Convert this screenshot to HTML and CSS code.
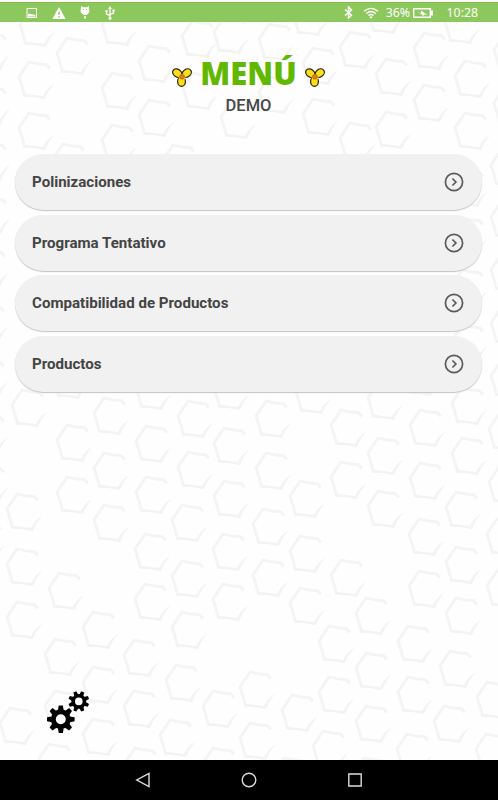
FILE: index.html
```
<!DOCTYPE html>
<html lang="es">
<head>
  <meta charset="UTF-8">
  <title>Menú</title>
  <link rel="stylesheet" href="styles.css">
</head>
<body>

<div class="status-bar">
  <div class="notifications">
    <svg width="12" height="12" viewBox="0 0 12 12"><path d="M1 1.500h9.500v9H1z" fill="none" stroke="#fff"/><path d="M2 9.500V7l1.500-.5L5 7.500l1.500-.5 1 1 1-.5 1 1v1z" fill="#fff"/></svg>
    <svg width="14" height="12" viewBox="0 0 14 12"><path d="M7 0l6.700 12H.3z" fill="#fff"/><path d="M7 4.500v3.500M7 9v1.500" stroke="#8dc85c" stroke-width="1.300"/></svg>
    <svg width="10" height="13" viewBox="0 0 10 13"><path d="M1 0l2 1.200h4L9 0v3l.6 1.500L8.800 7 6.500 9h-3L1.200 7 .4 4.500 1 3z" fill="#fff"/><path d="M5 10v2.700" stroke="#fff" stroke-width="1.500"/><path d="M3 3.500h.8M6.200 3.500H7" stroke="#8dc85c"/></svg>
    <svg width="10" height="14" viewBox="0 0 10 14"><path d="M5 2v10M5 9.500L1.500 8V5.500M5 8.500l3.500-1.500V4.500" fill="none" stroke="#fff" stroke-width="1.300"/><path d="M5 0l2 3H3zM7.300 3.500h2.400v2.200H7.300z" fill="#fff"/><circle cx="1.600" cy="5.300" r="1.300" fill="#fff"/><circle cx="5" cy="12.300" r="1.500" fill="#fff"/></svg>
  </div>
  <div class="system">
    <svg class="bluetooth" width="9" height="13" viewBox="0 0 9 13"><path d="M1 3.500l6.500 5.500-3 3V1l3 3L1 9.500" fill="none" stroke="#fff" stroke-width="1.500"/></svg>
    <svg class="wifi" width="16" height="12" viewBox="0 0 16 12"><path d="M1 4.200Q8-1.600 15 4.200M3.200 6.500Q8 2.500 12.800 6.500M5.400 8.600Q8 6.400 10.600 8.600" fill="none" stroke="#fff" stroke-width="1.300"/><path d="M6.300 9.900Q8 8.800 9.700 9.900L8 11.700z" fill="#fff"/></svg>
    <span class="percent">36%</span>
    <svg class="battery" width="20" height="10" viewBox="0 0 20 10"><path d="M.7.700h16.600v8.600H.7z" fill="none" stroke="#fff" stroke-width="1.400"/><path d="M18 2.500h2v5h-2z" fill="#fff"/><path d="M3.500 3.500l4 1.700L8.500 2.500l3 2.500 3.500 2.500-4-1-.8 1.500L8 6z" fill="#fff"/></svg>
    <span class="clock">10:28</span>
  </div>
</div>

<main class="screen">
  <svg class="honeycomb" width="498" height="738" viewBox="0 22 498 738">
    <defs>
      <g id="cell">
        <path d="M6.500 19L4.300 10.500 1 0 11-15 20.500-13 28.500-12.500 31.800-8.500" fill="none" stroke="#f4f4f4" stroke-width="2.800"/>
        <path d="M4.800 18.500Q5 16.500 8 17L25 19Q29 11 36.500 6.500 30.500 13 27 22L24.500 21.800 17 20.300 6 19.800z" fill="#f3f3f3"/>
      </g>
      <g id="flower">
        <g fill="#f9e01c" stroke="#29200a" stroke-width="1.200">
          <ellipse cx="5.300" cy="5.200" rx="5" ry="3.800" transform="rotate(35 5.300 5.200)"/>
          <ellipse cx="14.700" cy="5.200" rx="5" ry="3.800" transform="rotate(-35 14.700 5.200)"/>
          <ellipse cx="9.500" cy="13.500" rx="3.900" ry="4.800"/>
        </g>
        <path d="M6 7l3-1h2l3 1-1 4-3 2-3-2z" fill="#f9e01c"/>
        <circle cx="10" cy="8.800" r="2.400" fill="#e4801b" stroke="#b5540f" stroke-width=".8"/>
      </g>
    </defs>
  </svg>

  <header class="title">
    <div class="title-row">
      <svg width="20" height="19" viewBox="0 0 20 19"><use href="#flower"/></svg>
      <h1>MENÚ</h1>
      <svg width="20" height="19" viewBox="0 0 20 19"><use href="#flower"/></svg>
    </div>
    <h2>DEMO</h2>
  </header>

  <nav class="menu">
    <a class="menu-item"><span>Polinizaciones</span>
      <svg width="20" height="20" viewBox="0 0 20 20"><circle cx="10" cy="10" r="8.600"/><path d="M8.400 6.500l3.500 3.500-3.500 3.500"/></svg></a>
    <a class="menu-item"><span>Programa Tentativo</span>
      <svg width="20" height="20" viewBox="0 0 20 20"><circle cx="10" cy="10" r="8.600"/><path d="M8.400 6.500l3.500 3.500-3.500 3.500"/></svg></a>
    <a class="menu-item"><span>Compatibilidad de Productos</span>
      <svg width="20" height="20" viewBox="0 0 20 20"><circle cx="10" cy="10" r="8.600"/><path d="M8.400 6.500l3.500 3.500-3.500 3.500"/></svg></a>
    <a class="menu-item"><span>Productos</span>
      <svg width="20" height="20" viewBox="0 0 20 20"><circle cx="10" cy="10" r="8.600"/><path d="M8.400 6.500l3.500 3.500-3.500 3.500"/></svg></a>
  </nav>

  <div class="settings">
    <svg id="gears" width="44" height="44" viewBox="0 0 44 44"></svg>
  </div>
</main>

<footer class="nav-bar">
  <svg width="16" height="16" viewBox="0 0 16 16"><path d="M14 1.500v13L1.800 8z"/></svg>
  <svg width="16" height="16" viewBox="0 0 16 16"><circle cx="8" cy="8" r="6.800"/></svg>
  <svg width="16" height="16" viewBox="0 0 16 16"><path d="M1.800 2h12.400v12H1.800z"/></svg>
</footer>

<script src="script.js"></script>
</body>
</html>
```

FILE: styles.css
```
* {
  box-sizing: border-box;
}

body {
  margin: 0;
  height: 800px;
  display: flex;
  flex-direction: column;
  overflow: hidden;
  background-color: #fefefe;
  font-family: Roboto, "Liberation Sans", sans-serif;
}

svg {
  display: block;
  flex: none;
}

/* Android status bar */
.status-bar {
  height: 20px;
  margin-top: 2px;
  flex: none;
  display: flex;
  justify-content: space-between;
  align-items: center;
  padding: 0 20px 0 26px;
  border-top: 1px solid #84bd48;
  background-color: #8dc85c;
  color: #fff;
  font: 12.300px/18px "Noto Sans", sans-serif;
}

.notifications,
.system {
  display: flex;
  align-items: center;
}

.notifications {
  gap: 14px;
}

.notifications svg:nth-child(3) {
  margin: 0 1px 0 0;
}

.bluetooth {
  margin-right: 10px;
}

.wifi {
  margin-right: 6.500px;
}

.battery {
  margin: 0 13.500px 0 3px;
}

/* Main screen */
.screen {
  position: relative;
  flex: 1;
  display: flex;
  flex-direction: column;
}

.honeycomb {
  position: absolute;
  top: 0;
  left: 0;
  z-index: -1;
}

.title {
  height: 132px;
  padding: 30px 1px 0 0;
  text-align: center;
}

.title-row {
  display: flex;
  justify-content: center;
  align-items: center;
  gap: 8px;
  height: 42px;
}

.title-row svg {
  margin-top: 9px;
}

.title h1 {
  margin: 0;
  color: #60b800;
  font: 900 31px/42px "Noto Sans", sans-serif;
}

.title h2 {
  margin: 0;
  color: #484848;
  font-size: 16.500px;
  font-weight: 500;
  line-height: 24px;
}

.menu {
  display: flex;
  flex-direction: column;
  gap: 4.700px;
  padding: 0 16.500px 0 15px;
}

.menu-item {
  height: 56px;
  display: flex;
  align-items: center;
  justify-content: space-between;
  padding: 0 17.800px 0 17px;
  border-radius: 28px;
  background-color: #f1f1f1;
  box-shadow: 0 1px 1px #c4c4c4;
  color: #444;
  font-size: 15.100px;
  font-weight: 700;
}

.menu-item svg {
  fill: none;
  stroke: #5a5a5a;
  stroke-width: 1.700;
}

.settings {
  margin-top: auto;
  padding: 0 0 25px 46px;
}

/* Android navigation bar */
.nav-bar {
  height: 40px;
  flex: none;
  display: flex;
  justify-content: center;
  align-items: center;
  gap: 90px;
  background-color: #000;
}

.nav-bar svg {
  fill: none;
  stroke: #ddd;
  stroke-width: 1.400;
}
```

FILE: script.js
```
const svgNS = 'http://www.w3.org/2000/svg';

// left corner of every honeycomb cell
const cells = [
  [19, 25], [56, 53], [101, 24], [138, 61], [181, 36], [18, 77], [101, 88], [18, 128],
  [101, 140], [138, 115], [182, 88], [220, 117], [258, 39], [258, 92], [292, 14], [302, 63],
  [302, 114], [339, 47], [339, 138], [367, 12], [375, 74], [375, 127], [413, 48], [413, 100],
  [444, 22], [454, 76], [454, 128], [493, 50], [493, 103], [-26, 48], [-26, 102], [52, 159],
  [162, 160], [213, 32], [-26, 158], [-26, 212], [-27, 265], [-28, 320], [-28, 375], [18, 180],
  [490, 165], [490, 217], [490, 270], [490, 323], [490, 376], [451, 185], [451, 233], [451, 285],
  [451, 340], [11, 405], [93, 413], [177, 416], [56, 440], [135, 441], [213, 443], [93, 468],
  [177, 467], [56, 492], [135, 492], [213, 496], [6, 509], [93, 520], [171, 520], [134, 549],
  [212, 549], [6, 564], [135, 388], [213, 388], [52, 377], [171, 576], [-28, 430], [-28, 481],
  [-31, 538], [48, 588], [255, 416], [330, 425], [367, 453], [409, 425], [451, 453], [255, 468],
  [330, 477], [409, 478], [289, 496], [367, 506], [252, 524], [445, 507], [488, 482], [488, 429],
  [408, 534], [486, 534], [289, 551], [445, 562], [295, 392], [367, 398], [451, 403], [252, 575],
  [330, 575], [408, 586], [404, 374], [134, 599], [212, 599], [6, 617], [82, 627], [171, 627],
  [44, 654], [123, 655], [165, 680], [82, 682], [44, 706], [123, 706], [202, 706], [-1, 723],
  [82, 734], [159, 735], [38, 759], [124, 763], [202, 763], [239, 687], [239, 738], [289, 603],
  [355, 613], [486, 586], [445, 613], [318, 641], [397, 641], [355, 668], [439, 666], [318, 692],
  [397, 692], [476, 697], [281, 710], [355, 721], [433, 721], [312, 746], [396, 749], [475, 749],
  [273, 773], [353, 773]
];

const honeycomb = document.querySelector('.honeycomb');
cells.forEach(([x, y]) => {
  const use = document.createElementNS(svgNS, 'use');
  use.setAttribute('href', '#cell');
  use.setAttribute('x', x);
  use.setAttribute('y', y);
  honeycomb.appendChild(use);
});

function drawGear(cx, cy, outer, body, hole, turn) {
  const ring = document.createElementNS(svgNS, 'circle');
  ring.setAttribute('cx', cx);
  ring.setAttribute('cy', cy);
  ring.setAttribute('r', (body + hole) / 2);
  ring.setAttribute('fill', 'none');
  ring.setAttribute('stroke', '#000');
  ring.setAttribute('stroke-width', body - hole);
  const gears = document.getElementById('gears');
  gears.appendChild(ring);

  const w = outer * 0.15;
  for (let i = 0; i < 8; i++) {
    const tooth = document.createElementNS(svgNS, 'path');
    tooth.setAttribute('d', `M${-w} ${-outer}H${w}L${w * 1.4} ${1 - body}H${-w * 1.4}z`);
    tooth.setAttribute('transform', `translate(${cx} ${cy}) rotate(${i * 45 + turn})`);
    gears.appendChild(tooth);
  }
}

drawGear(14.8, 28.3, 13.8, 10, 5, 0);
drawGear(32.8, 10.4, 10.4, 7.4, 3.8, 22.5);
```
